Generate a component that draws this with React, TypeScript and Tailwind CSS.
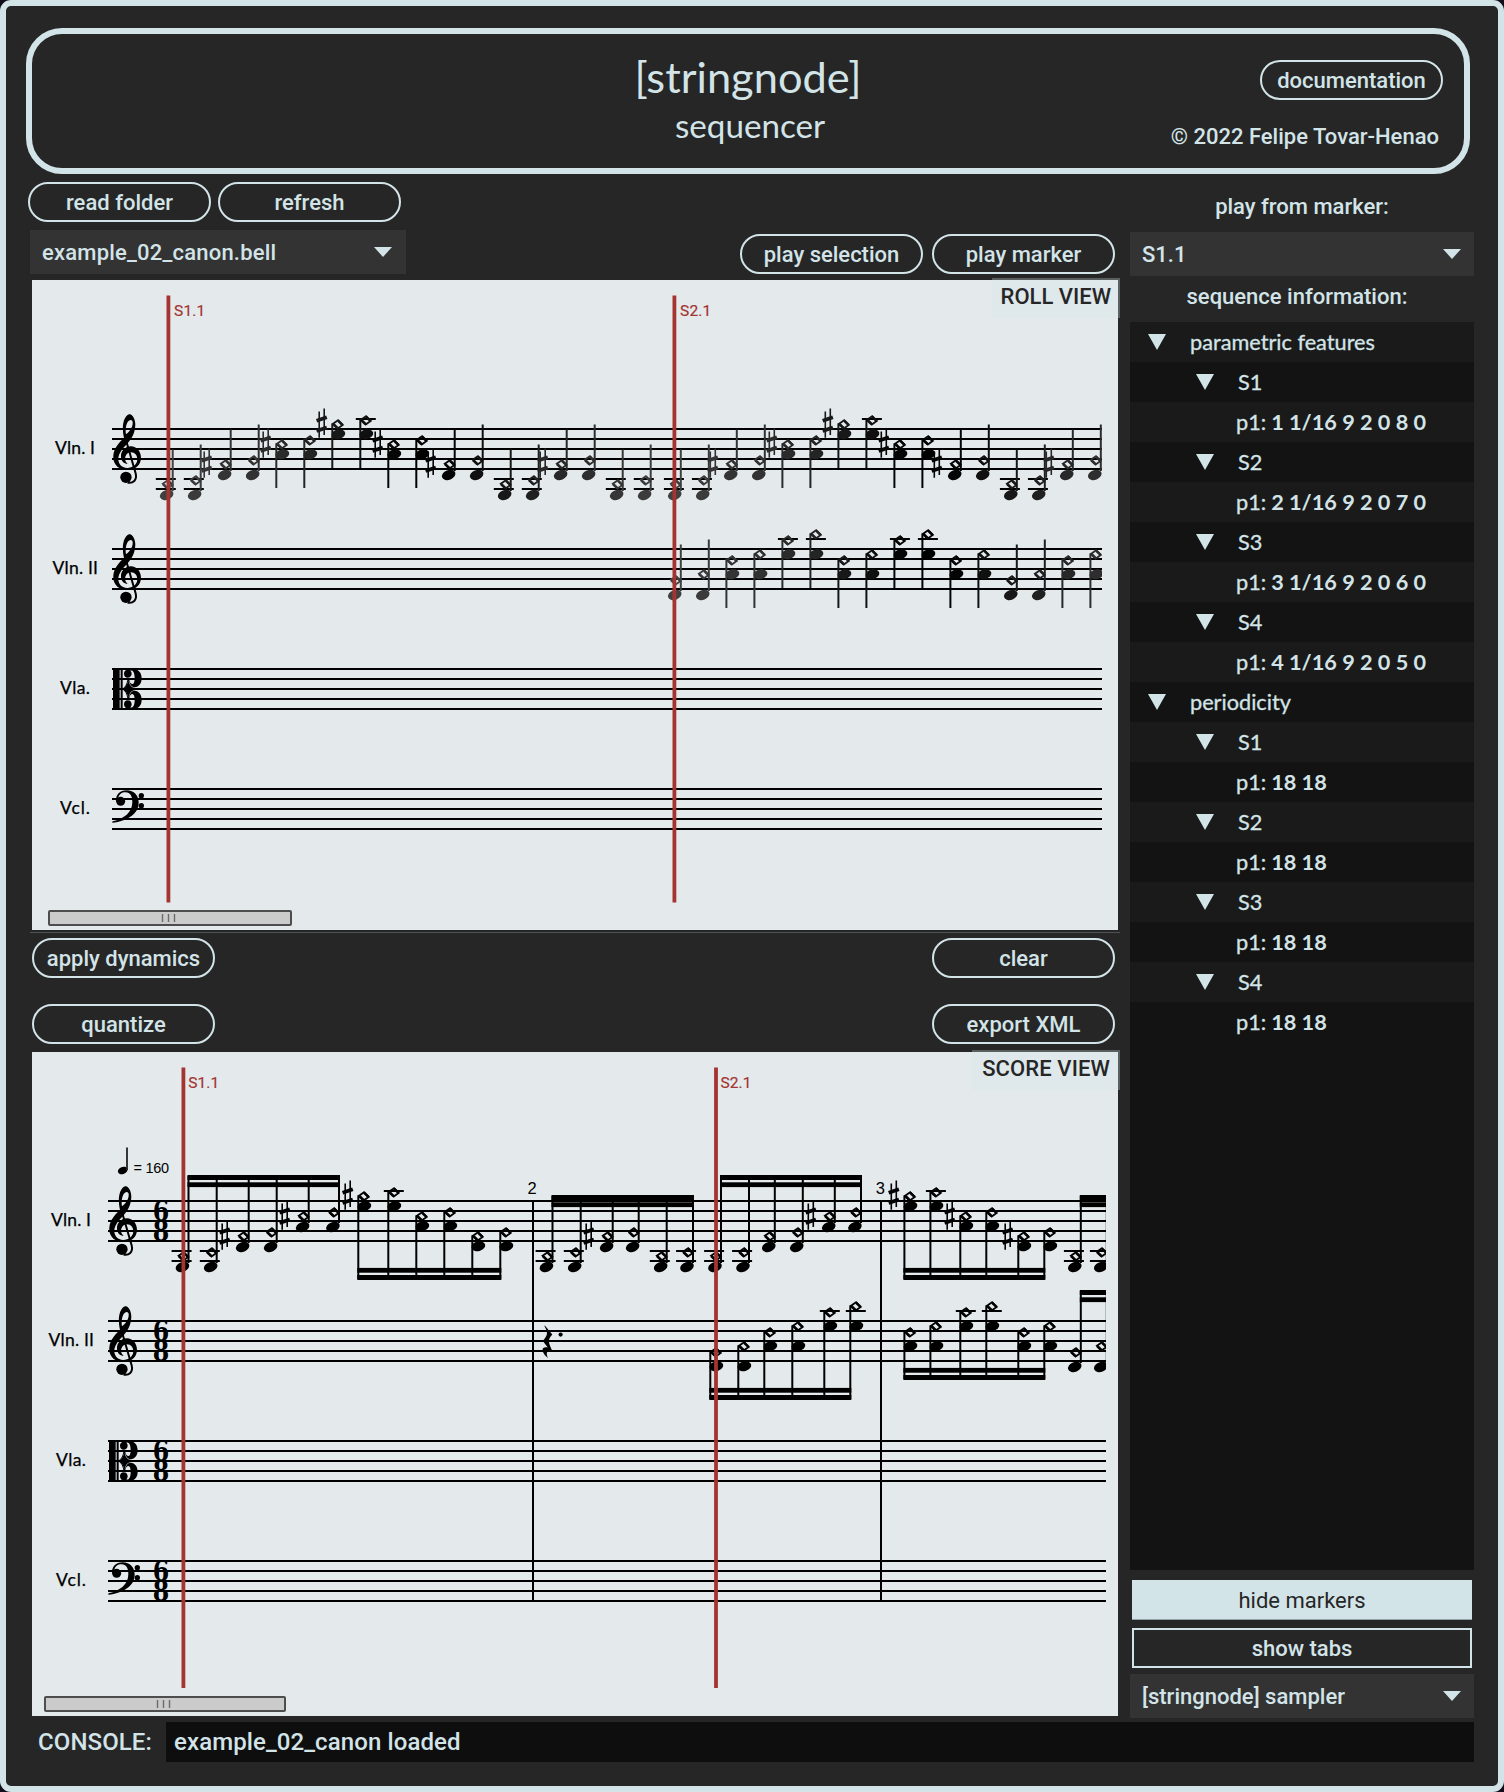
import React from "react";

const INK = "#000000";
const RED = "#a33431";

/* Pitch offset below the top staff line, in px (one step is 5px). */
const Y: Record<string, number> = {
  G3: 65, B3: 55, C4: 50, D4: 45, F4: 35, G4: 30, A4: 25, C5: 15, D5: 10, E5: 5, G5: -5, A5: -10, B5: -15,
};

const ON_LINE = new Set(["C4", "G4", "D5", "A5"]);

type Pair = { low: string; high: string; sharp?: boolean };

const P = (low: string, high: string, sharp = false): Pair => ({ low, high, sharp });

const CANON: Pair[] = [
  P("G3", "B3"), P("G3", "C4"), P("D4", "F4", true), P("D4", "G4"), P("A4", "C5", true), P("A4", "D5"),
  P("E5", "G5", true), P("E5", "A5"), P("A4", "C5", true), P("A4", "D5"), P("D4", "F4", true), P("D4", "G4"),
  P("G3", "B3"), P("G3", "C4"), P("D4", "F4", true), P("D4", "G4"), P("G3", "B3"), P("G3", "C4"),
];

const ANSWER: Pair[] = [
  P("D4", "G4"), P("D4", "A4"), P("A4", "D5"), P("A4", "E5"), P("E5", "A5"), P("E5", "B5"),
  P("A4", "D5"), P("A4", "E5"), P("E5", "A5"), P("E5", "B5"), P("A4", "D5"), P("A4", "E5"),
  P("D4", "G4"), P("D4", "A4"), P("A4", "D5"), P("A4", "E5"),
];

const SHADES = [
  "#404040", "#3b3b3b", "#343434", "#323232", "#2b2b2b", "#242424", "#181818", "#101010", "#060606",
  "#000000", "#050505", "#101010", "#181818", "#202020", "#282828", "#2e2e2e", "#363636", "#3c3c3c",
];

const stemUp = (pair: Pair) => Y[pair.low] > 25;

function Sharp({ x, y, color }: { x: number; y: number; color: string }) {
  return (
    <g transform={`translate(${x} ${y})`} stroke={color}>
      <path d="M-2.5-12.6V13.8M2.5-15.4V11" strokeWidth={1.6} />
      <path d="M-5.1-3.2L5.1-6.8M-5.1 7L5.1 3.4" strokeWidth={3.7} />
    </g>
  );
}

/* One double-stop: filled head, harmonic diamond, ledger lines, stem. */
function Note({ x, top, pair, color = INK, up, beam, sharp }: {
  x: number; top: number; pair: Pair; color?: string; up: boolean; beam?: number; sharp?: boolean;
}) {
  const low = top + Y[pair.low];
  const high = top + Y[pair.high];
  const stemX = up ? x + 6.4 : x - 6;
  const dx = up ? x + 1.3 : x - 0.5;
  const dy = high + (ON_LINE.has(pair.high) ? 1.4 : 0.4);
  const y1 = up ? beam ?? high - 34.5 : high - 0.5;
  const y2 = up ? low - 3 : beam ?? low + 34;
  const ledgers: number[] = [];
  if (pair.low === "G3") ledgers.push(50, 60);
  if (pair.high === "A5" || pair.high === "B5") ledgers.push(-10);
  return (
    <g>
      {ledgers.map((l) => (
        <path key={l} d={`M${x - 10.5} ${top + l}h20`} stroke={INK} strokeWidth={2} />
      ))}
      <path d={`M${stemX} ${y1}V${y2}`} stroke={color} strokeWidth={2} />
      <ellipse cx={x} cy={low + (up ? 1 : 0.2)} rx={7} ry={4.9} fill={color} transform={`rotate(${up ? -22 : -14} ${x} ${low})`} />
      <path
        d={`M${dx - 4.8} ${dy - 0.7}L${dx + 0.3} ${dy - 4.1}L${dx + 4.9} ${dy + 0.5}L${dx - 0.1} ${dy + 4.1}Z`}
        fill="none"
        stroke={color}
        strokeWidth={1.9}
      />
      <path d={`M${dx - 4.6} ${dy - 0.4}L${dx - 0.4} ${dy + 3.6}M${dx + 0.4} ${dy - 3.6}L${dx + 4.6} ${dy + 0.4}`} stroke={color} strokeWidth={2.5} />
      {(sharp ?? pair.sharp) && <Sharp x={up ? x - 17.6 : x - 16.6} y={high} color={color} />}
    </g>
  );
}

function TrebleClef({ x, top }: { x: number; top: number }) {
  return (
    <g transform={`translate(${x} ${top}) scale(.33333) translate(-250 -117)`}>
      <path
        fillRule="evenodd"
        d="M297 73C285 77 277 98 279 121C279 130 281 138 282 144C262 162 249 181 250 203C251 225 268 240 292 240C317 240 333 224 333 203C333 184 320 169 303 169C285 169 272 184 273 201C274 213 282 221 293 222C286 215 284 207 286 200C289 191 296 187 303 187C315 187 322 196 322 208C322 224 308 234 292 234C274 234 264 220 265 205C266 190 278 175 293 160C309 143 316 124 316 103C316 87 306 69 297 73ZM302 90C309 90 310 100 306 110C302 120 296 126 288 133C285 115 290 91 302 90Z"
      />
      <path d="M286 143L317 250C322 271 309 281 293 278" fill="none" stroke={INK} strokeWidth={6} />
      <circle cx={288} cy={262} r={17} />
    </g>
  );
}

function AltoClef({ x, top }: { x: number; top: number }) {
  const lobe =
    "M309 147C318 142 322 136 324 124L327 124C330 134 335 142 344 142C357 141 365 130 365 115C365 98 355 86 336 86C320 86 312 92 312 101C312 109 317 113 323 113C330 113 335 108 335 101C335 97 333 94 331 92C339 89 344 98 344 114C344 127 341 133 336 132C332 131 329 127 328 120L322 120C320 132 316 141 306 147Z";
  return (
    <g transform={`translate(${x} ${top}) scale(.33333) translate(-279 -87)`}>
      <rect x={279} y={86} width={20} height={122} />
      <rect x={302} y={86} width={6} height={122} />
      <path d="M308 147C320 140 324 130 325 116C326 130 332 143 346 144V150C332 151 326 164 325 178C324 164 320 154 308 147Z" />
      <path d={lobe} />
      <path d={lobe} transform="translate(0 294) scale(1 -1)" />
    </g>
  );
}

function BassClef({ x, top }: { x: number; top: number }) {
  return (
    <g transform={`translate(${x} ${top}) scale(.33333) translate(-276 -447)`}>
      <path d="M288 486C286 464 300 451 320 451C342 451 356 466 356 488C356 522 322 543 277 548C277 546 277 545 278 544C312 536 337 518 337 486C337 468 330 457 317 457C305 457 297 463 295 474Z" />
      <circle cx={302} cy={484} r={13.5} />
      <circle cx={364} cy={467} r={8} />
      <circle cx={364} cy={497} r={8} />
    </g>
  );
}

function Staves({ x, right, tops, shift }: { x: number; right: number; tops: number[]; shift: number }) {
  const names: [string, number, number][] = [["Vln. I", 55, 40], ["Vln. II", 52.5, 45.5], ["Vla.", 60, 30], ["Vcl.", 60, 30]];
  return (
    <g>
      {tops.map((t, i) => (
        <g key={t}>
          {[0, 10, 20, 30, 40].map((l) => (
            <path key={l} d={`M${x} ${t + l}H${right}`} stroke={INK} strokeWidth={2} />
          ))}
          <text x={names[i][1] + shift} y={t + 25} fontSize={17.5} fontFamily="Lato, sans-serif" textLength={names[i][2]} stroke={INK} strokeWidth={0.25}>
            {names[i][0]}
          </text>
          {i < 2 && <TrebleClef x={113.3 + shift} top={t} />}
          {i === 2 && <AltoClef x={113 + shift} top={t} />}
          {i === 3 && <BassClef x={112 + shift} top={t} />}
        </g>
      ))}
    </g>
  );
}

function Marker({ x, top, bottom, label, gap = 5.7 }: { x: number; top: number; bottom: number; label: string; gap?: number }) {
  return (
    <g fill={RED}>
      <rect x={x - 1.9} y={top} width={3.8} height={bottom - top} />
      <text x={x + gap} y={top + 20.7} fontSize={15.5} fontFamily="Roboto, sans-serif" textLength={31} stroke={RED} strokeWidth={0.2}>
        {label}
      </text>
    </g>
  );
}

function Scrollbar({ x, y, width }: { x: number; y: number; width: number }) {
  const mid = x + width / 2 - 1.5;
  return (
    <g>
      <rect x={x + 1} y={y + 1} width={width - 2} height={14} rx={1} fill="#cbcbcb" stroke="#4d4d4d" strokeWidth={2} />
      <path d={`M${mid - 6} ${y + 4}v8M${mid} ${y + 4}v8M${mid + 6} ${y + 4}v8`} stroke="#6b6b6b" strokeWidth={1.4} />
    </g>
  );
}

function RollNotation() {
  const upper = [
    ...CANON.map((pair, i) => ({ pair, i, x: 166.3 + 28 * i + (i < 2 ? 0 : stemUp(pair) ? 2 : 4) })),
    ...CANON.slice(0, 16).map((pair, i) => ({ pair, i, x: 674.4 + 28 * i + (stemUp(pair) ? 0 : 2) })),
  ];
  return (
    <svg className="block" width={1086} height={650} viewBox="32 280 1086 650">
      <defs>
        <clipPath id="roll"><rect x={32} y={280} width={1070} height={650} /></clipPath>
      </defs>
      <Staves x={112} right={1102} tops={[429, 549, 669, 789]} shift={0} />
      <g clipPath="url(#roll)">
        {upper.map(({ pair, i, x }) => (
          <Note key={x} x={x} top={429} pair={pair} up={stemUp(pair)} color={SHADES[i]} />
        ))}
        {ANSWER.map((pair, i) => (
          <Note key={i} x={674.4 + 28 * i + (stemUp(pair) ? 0 : 2)} top={549} pair={pair} up={stemUp(pair)} color={SHADES[i]} />
        ))}
      </g>
      <Marker x={168.4} top={295.5} bottom={902.5} label="S1.1" />
      <Marker x={674.4} top={295.5} bottom={902.5} label="S2.1" />
      <Scrollbar x={48} y={910} width={244} />
    </svg>
  );
}

type Group = { top: number; up: boolean; beam: number; stems: number[]; pairs: Pair[]; sharps?: number[] };

const GROUPS: Group[] = [
  { top: 1201, up: true, beam: 1175, stems: [188.5, 216.7, 248.7, 276.7, 308.7, 339], pairs: CANON.slice(0, 6), sharps: [2, 4] },
  { top: 1201, up: false, beam: 1280, stems: [358.3, 388.3, 416.3, 444.3, 472.3, 500.3], pairs: CANON.slice(6, 12), sharps: [0] },
  { top: 1201, up: true, beam: 1195, stems: [552.5, 580.7, 612.7, 638.7, 666.7, 693], pairs: CANON.slice(12, 18), sharps: [2] },
  { top: 1201, up: true, beam: 1175, stems: [721, 749, 774.8, 802.8, 834.8, 861], pairs: CANON.slice(0, 6), sharps: [4] },
  { top: 1201, up: false, beam: 1280, stems: [904.4, 930.4, 960.3, 986.3, 1018.3, 1044.3], pairs: CANON.slice(6, 12), sharps: [0, 2, 4] },
  { top: 1201, up: true, beam: 1195, stems: [1080.8, 1106.8], pairs: CANON.slice(12, 14) },
  { top: 1321, up: false, beam: 1400, stems: [710.3, 738.3, 764.3, 792.3, 824.3, 850.3], pairs: ANSWER.slice(0, 6) },
  { top: 1321, up: false, beam: 1380, stems: [904.4, 930.4, 960.3, 986.3, 1018.3, 1044.3], pairs: ANSWER.slice(6, 12) },
  { top: 1321, up: true, beam: 1290, stems: [1080.8, 1106.8], pairs: ANSWER.slice(12, 14) },
];

function ScoreNotation() {
  return (
    <svg className="block" width={1086} height={664} viewBox="32 1052 1086 664">
      <defs>
        <clipPath id="score"><rect x={32} y={1052} width={1074} height={664} /></clipPath>
      </defs>
      <Staves x={108} right={1106} tops={[1201, 1321, 1441, 1561]} shift={-4} />
      {[1201, 1321, 1441, 1561].map((t) => (
        <g key={t} fontFamily="DejaVu Serif, serif" fontWeight={700} fontSize={27}>
          <text x={152.8} y={t + 19.8} textLength={16.5} lengthAdjust="spacingAndGlyphs">6</text>
          <text x={152.8} y={t + 39.8} textLength={16.5} lengthAdjust="spacingAndGlyphs">8</text>
        </g>
      ))}
      <path d="M533 1200V1602M881 1200V1602" stroke={INK} strokeWidth={2} />
      <g fontFamily="Liberation Sans, sans-serif">
        <text x={532} y={1194} fontSize={16.5} textAnchor="middle">2</text>
        <text x={880.3} y={1194} fontSize={16.5} textAnchor="middle">3</text>
        <text x={133.5} y={1173} fontSize={14.5} textLength={35.5}>= 160</text>
      </g>
      <ellipse cx={122.7} cy={1170.5} rx={5} ry={3.6} transform="rotate(-22 122.7 1170.5)" />
      <path d="M127 1147.5V1170" stroke="#222222" strokeWidth={1.8} />
      <path d="M544.8 1325.5L552.3 1334.6C548 1339.5 547.5 1341.5 552.8 1351.8C548 1349.6 545 1351.6 548 1358C541.5 1353 540 1346 547.8 1347.4L542.8 1341C547.5 1335.5 548.5 1333 544.4 1326Z" />
      <circle cx={560.6} cy={1334.6} r={2.1} />
      <g clipPath="url(#score)">
        {GROUPS.map((g, n) => {
          const x1 = g.stems[0] - 1;
          const x2 = g.stems[g.stems.length - 1] + 1;
          const outer = g.up ? g.beam : g.beam - 5;
          const inner = g.up ? g.beam + 7.3 : g.beam - 12.1;
          return (
            <g key={n}>
              {g.pairs.map((pair, i) => (
                <Note
                  key={i}
                  x={g.up ? g.stems[i] - 6.4 : g.stems[i] + 6}
                  top={g.top}
                  pair={pair}
                  up={g.up}
                  beam={g.up ? g.beam + 1 : g.beam - 1}
                  sharp={!!g.sharps?.includes(i)}
                />
              ))}
              <rect x={x1} y={outer} width={x2 - x1} height={5} />
              <rect x={x1} y={inner} width={x2 - x1} height={4.8} />
            </g>
          );
        })}
      </g>
      <Marker x={183.4} top={1067.5} bottom={1688} label="S1.1" gap={4.8} />
      <Marker x={716} top={1067.5} bottom={1688} label="S2.1" gap={4.4} />
      <Scrollbar x={44} y={1696} width={242} />
    </svg>
  );
}

function Pill({ children, className = "" }: { children: React.ReactNode; className?: string }) {
  return (
    <button className={`flex h-10 w-[183px] items-center justify-center whitespace-nowrap rounded-full border-2 border-[#d3e4e8] pt-0.5 font-medium ${className}`}>
      {children}
    </button>
  );
}

function Select({ children, className = "" }: { children: React.ReactNode; className?: string }) {
  return (
    <div className={`flex h-11 items-center justify-between bg-[#333333] pl-3 font-medium ${className}`}>
      <span className="pt-0.5">{children}</span>
      <svg width="18" height="10" viewBox="0 0 18 10"><path d="M0 0H18L9 10Z" fill="#d3e4e8" /></svg>
    </div>
  );
}

type Row = { level: number; text: string; value?: string };

const ROWS: Row[] = [
  { level: 0, text: "parametric features" },
  ...[1, 2, 3, 4].flatMap((n) => [
    { level: 1, text: `S${n}` },
    { level: 2, text: "p1:", value: `${n} 1/16 9 2 0 ${9 - n} 0` },
  ]),
  { level: 0, text: "periodicity" },
  ...[1, 2, 3, 4].flatMap((n) => [
    { level: 1, text: `S${n}` },
    { level: 2, text: "p1:", value: "18 18" },
  ]),
];

function Tree() {
  return (
    <div className="h-[1248px] bg-[#131313] font-[Lato] text-[21.7px] [-webkit-text-stroke:0.3px_#d3e4e8]">
      {ROWS.map((r, i) => (
        <div key={i} className={`flex h-10 items-center whitespace-pre ${i % 2 ? "bg-[#131313]" : "bg-[#1a1a1a]"} ${r.level === 0 ? "pl-[18px]" : r.level === 1 ? "pl-[66px]" : "pl-[106px]"}`}>
          {r.level < 2 && (
            <svg className="mr-6" width="18" height="16" viewBox="0 0 18 16"><path d="M0 0H18L9 16Z" fill="#d3e4e8" /></svg>
          )}
          <span className="pt-0.5">{r.text}</span>
          {r.value && <b className="ml-[5px] pt-0.5 font-bold [-webkit-text-stroke:0px]">{r.value}</b>}
        </div>
      ))}
    </div>
  );
}

export default function App() {
  return (
    <div className="h-[1792px] w-[1504px] overflow-hidden bg-[#120c1c] font-[Roboto] text-[22px] leading-none text-[#d3e4e8]">
      <div className="flex h-full flex-col rounded-[11px] border-[6px] border-[#d3e4e8] bg-[#262626]">
        <header className="ml-5 mt-[22px] grid h-[146px] w-[1444px] grid-cols-[1fr_auto_1fr] rounded-[36px] border-[6px] border-[#d3e4e8]">
          <div />
          <div className="flex flex-col items-center pt-5 font-[Lato]">
            <h1 className="text-[43.4px] leading-[44px]">[stringnode]</h1>
            <h2 className="ml-1 mt-2 text-[33.2px] leading-[38px]">sequencer</h2>
          </div>
          <div className="flex flex-col items-end pr-[21px] pt-[26px]">
            <Pill>documentation</Pill>
            <p className="mr-1 mt-[26px] whitespace-nowrap font-medium">© 2022 Felipe Tovar-Henao</p>
          </div>
        </header>

        <main className="flex pl-[22px] pt-2">
          <section className="w-[1092px]">
            <div className="flex gap-[7px]">
              <Pill>read folder</Pill>
              <Pill>refresh</Pill>
            </div>
            <div className="mt-2 flex h-11 items-end pr-[5px]">
              <Select className="ml-0.5 mr-auto w-[376px] pr-3.5 tracking-[0.2px]">example_02_canon.bell</Select>
              <Pill>play selection</Pill>
              <Pill className="ml-[9px]">play marker</Pill>
            </div>
            <div className="relative ml-1 mt-1.5 h-[650px] w-[1086px] bg-[#e4eaec]">
              <RollNotation />
              <div className="absolute -right-0.5 -top-0.5 flex h-10 w-32 items-center justify-end bg-[#d3e4e8]/30 pb-0.5 pr-[9px] font-medium text-[#262626]">
                ROLL VIEW
              </div>
            </div>
            <div className="ml-0.5 h-[3px] w-[1090px] border-b border-[#4d5253]" />
            <div className="mt-[5px] flex justify-between pl-1 pr-[5px]">
              <Pill>apply dynamics</Pill>
              <Pill>clear</Pill>
            </div>
            <div className="mt-[26px] flex justify-between pl-1 pr-[5px]">
              <Pill>quantize</Pill>
              <Pill>export XML</Pill>
            </div>
            <div className="relative ml-1 mt-2 h-[664px] w-[1086px] bg-[#e4eaec]">
              <ScoreNotation />
              <div className="absolute -right-0.5 -top-0.5 flex h-10 w-[148px] items-center justify-end bg-[#d3e4e8]/30 pb-0.5 pr-[10px] font-medium tracking-[0.1px] text-[#262626]">
                SCORE VIEW
              </div>
            </div>
          </section>

          <aside className="ml-2.5 w-[344px]">
            <div className="flex h-[50px] items-center justify-center font-medium">play from marker:</div>
            <Select className="pr-[13px]">S1.1</Select>
            <div className="flex h-[46px] items-center justify-center pb-1 pr-2.5 font-medium">sequence information:</div>
            <Tree />
            <button className="mx-0.5 mt-2.5 flex h-10 w-[340px] items-center justify-center border-b border-[#8fa3a8] bg-[#d3e4e8] pt-0.5 text-[#262626]">
              hide markers
            </button>
            <button className="mx-0.5 mt-2 flex h-10 w-[340px] items-center justify-center border-2 border-[#d3e4e8] pt-0.5 font-medium">
              show tabs
            </button>
            <Select className="mt-1.5 pr-[13px]">[stringnode] sampler</Select>
          </aside>
        </main>

        <footer className="mt-1 flex h-10 items-center pl-8 text-[24px] font-medium tracking-[0.1px]">
          <span className="w-32">CONSOLE:</span>
          <div className="flex h-10 w-[1308px] items-center bg-[#0e0e0e] pl-2">example_02_canon loaded</div>
        </footer>
      </div>
    </div>
  );
}
